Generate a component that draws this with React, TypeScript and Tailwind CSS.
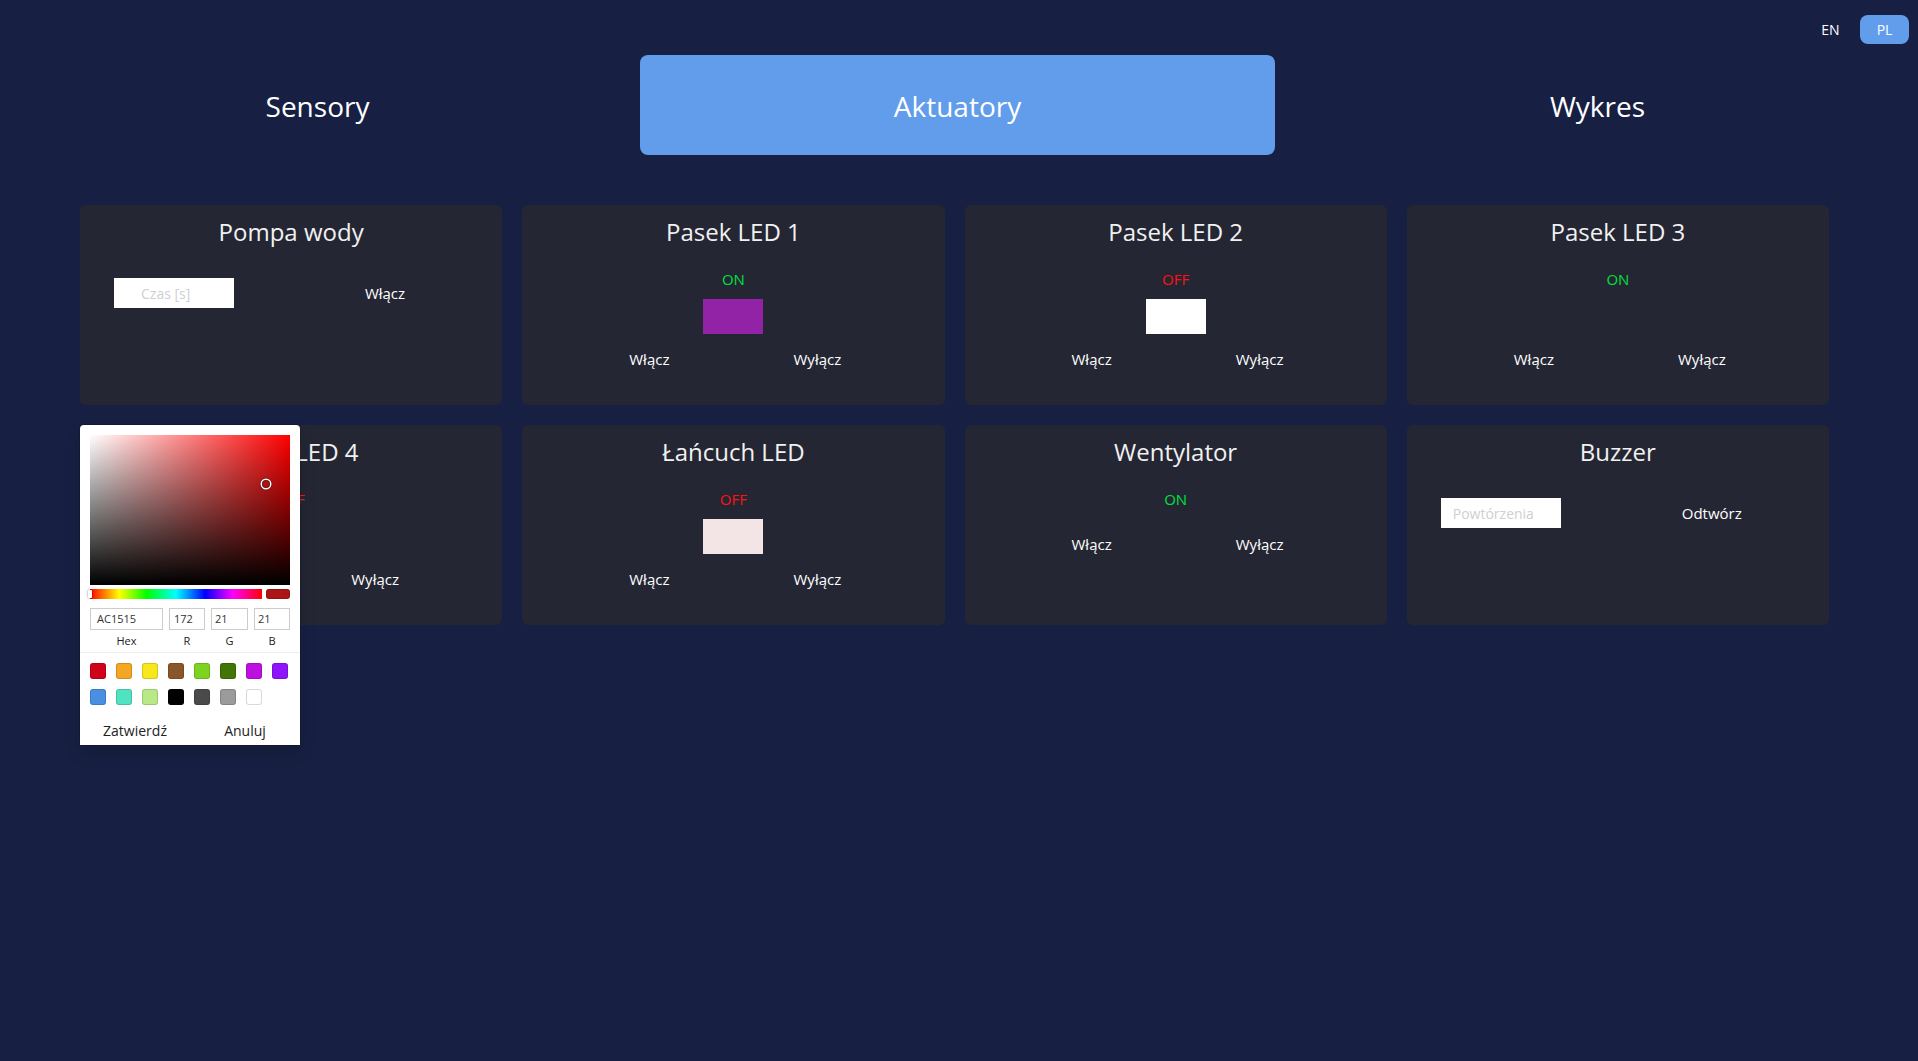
import { useState } from "react";

type Actuator = {
  name: string;
  kind: "led" | "switch" | "input";
  on?: boolean;
  color?: string | null;
  placeholder?: string;
  placeholderPad?: string;
  action?: string;
  picker?: boolean;
};

const actuators: Actuator[] = [
  { name: "Pompa wody", kind: "input", placeholder: "Czas [s]", placeholderPad: "pl-[27px]", action: "Włącz" },
  { name: "Pasek LED 1", kind: "led", on: true, color: "#9323a6" },
  { name: "Pasek LED 2", kind: "led", on: false, color: "#ffffff" },
  { name: "Pasek LED 3", kind: "led", on: true, color: null },
  { name: "Pasek LED 4", kind: "led", on: false, color: null, picker: true },
  { name: "Łańcuch LED", kind: "led", on: false, color: "#f3e5e5" },
  { name: "Wentylator", kind: "switch", on: true },
  { name: "Buzzer", kind: "input", placeholder: "Powtórzenia", placeholderPad: "pl-[12px]", action: "Odtwórz" },
];

// react-color sketch presets
const presets = [
  "#d0021b", "#f5a623", "#f8e71c", "#8b572a", "#7ed321", "#417505", "#bd10e0", "#9013fe",
  "#4a90e2", "#50e3c2", "#b8e986", "#000000", "#4a4a4a", "#9b9b9b", "#ffffff",
];

function ColorPicker() {
  return (
    <div className="absolute left-0 top-0 z-10 w-[220px] bg-white shadow-[0_0_0_1px_rgba(0,0,0,0.15),0_8px_16px_rgba(0,0,0,0.15)] rounded-t-[4px]">
      <div className="px-[10px] pt-[10px]">
        {/* saturation */}
        <div className="relative h-[150px] w-[200px] bg-[#ff0000]">
          <div className="absolute inset-0 bg-[linear-gradient(to_right,#fff,rgba(255,255,255,0))]" />
          <div className="absolute inset-0 bg-[linear-gradient(to_top,#000,rgba(0,0,0,0))]" />
          <div className="absolute left-[87.8%] top-[32.5%] -ml-[4px] -mt-[4px] h-[8px] w-[8px] rounded-full shadow-[0_0_0_1.5px_#fff,inset_0_0_1px_1px_rgba(0,0,0,0.3),0_0_1px_2px_rgba(0,0,0,0.4)]" />
        </div>
        {/* hue + swatch */}
        <div className="mt-[4px] flex gap-[4px]">
          <div className="relative h-[10px] flex-1 bg-[linear-gradient(to_right,#f00_0%,#ff0_17%,#0f0_33%,#0ff_50%,#00f_67%,#f0f_83%,#f00_100%)]">
            <div className="absolute left-[-2px] top-[1px] h-[8px] w-[4px] rounded-[1px] bg-white shadow-[0_0_2px_rgba(0,0,0,0.6)]" />
          </div>
          <div className="h-[10px] w-[24px] rounded-[3px] bg-[#ac1515] shadow-[inset_0_0_0_1px_rgba(0,0,0,0.15)]" />
        </div>
        {/* inputs */}
        <div className="mt-[9px] flex text-[11px] text-[#333]">
          {[
            { v: "AC1515", l: "Hex", w: "w-[73px]", pad: "pl-[7px]" },
            { v: "172", l: "R", w: "w-[36px] ml-[6px]", pad: "pl-[5px]" },
            { v: "21", l: "G", w: "w-[37px] ml-[6px]", pad: "pl-[4px]" },
            { v: "21", l: "B", w: "w-[36px] ml-[6px]", pad: "pl-[4px]" },
          ].map((f) => (
            <div key={f.l} className={f.w}>
              <div className={`flex h-[22px] items-center shadow-[inset_0_0_0_1px_#ccc] ${f.pad}`}>{f.v}</div>
              <div className="mt-[4px] text-center leading-[14px] text-[#222]">{f.l}</div>
            </div>
          ))}
        </div>
      </div>
      {/* preset swatches */}
      <div className="mt-[4px] flex flex-wrap border-t border-[#eeeeee] pl-[10px] pt-[10px]">
        {presets.map((c) => (
          <div
            key={c}
            className="mb-[10px] mr-[10px] h-[16px] w-[16px] rounded-[3px] shadow-[inset_0_0_0_1px_rgba(0,0,0,0.15)]"
            style={{ backgroundColor: c }}
          />
        ))}
      </div>
      <div className="flex h-[30px] items-center text-[14px] text-[#222]">
        <button className="flex-1 text-center">Zatwierdź</button>
        <button className="flex-1 text-center">Anuluj</button>
      </div>
    </div>
  );
}

function Status({ on }: { on?: boolean }) {
  return (
    <div className={`mt-[21px] h-[20px] text-[15px] leading-[20px] ${on ? "text-[#00e03c]" : "text-[#ff1212]"}`}>
      {on ? "ON" : "OFF"}
    </div>
  );
}

function OnOffButtons({ top }: { top: string }) {
  return (
    <div className={`flex justify-center gap-[84px] ${top}`}>
      <button className="h-[20px] w-[84px] text-[15px] leading-[20px] text-white">Włącz</button>
      <button className="h-[20px] w-[84px] text-[15px] leading-[20px] text-white">Wyłącz</button>
    </div>
  );
}

function ActuatorCard({ a }: { a: Actuator }) {
  return (
    <div className="relative flex h-[200px] flex-col items-center rounded-[6px] bg-[#242633] pt-[11px]">
      <h3 className="text-[24px] leading-[32px] text-[#f1f1f1]">{a.name}</h3>

      {a.kind === "input" && (
        <div className="mt-[30px] flex w-full items-center">
          <input
            placeholder={a.placeholder}
            className={`ml-[34px] h-[30px] w-[120px] bg-white text-[14px] outline-none placeholder:text-[#cfcfcf] ${a.placeholderPad}`}
          />
          <button className="ml-[101px] w-[100px] text-center text-[15px] text-white">{a.action}</button>
        </div>
      )}

      {a.kind === "led" && (
        <>
          <Status on={a.on} />
          <div
            className="mt-[10px] h-[35px] w-[60px]"
            style={{ backgroundColor: a.color ?? "transparent" }}
          />
          <OnOffButtons top="mt-[15px]" />
        </>
      )}

      {a.kind === "switch" && (
        <>
          <Status on={a.on} />
          <OnOffButtons top="mt-[25px]" />
        </>
      )}

      {a.picker && <ColorPicker />}
    </div>
  );
}

export default function App() {
  const [tab, setTab] = useState("Aktuatory");
  const [lang, setLang] = useState("PL");

  return (
    <div className="min-h-screen bg-[#172043] font-['Open_Sans',sans-serif]">
      {/* language switch */}
      <div className="flex justify-end gap-[5px] pr-[9px] pt-[15px]">
        {["EN", "PL"].map((l) => (
          <button
            key={l}
            onClick={() => setLang(l)}
            className={`h-[29px] w-[49px] rounded-[8px] text-[14px] text-white ${lang === l ? "bg-[#619dea]" : ""}`}
          >
            {l}
          </button>
        ))}
      </div>

      {/* tabs */}
      <div className="mt-[11px] grid w-[1915px] grid-cols-3 gap-[5px]">
        {["Sensory", "Aktuatory", "Wykres"].map((t) => (
          <button
            key={t}
            onClick={() => setTab(t)}
            className={`h-[100px] rounded-[8px] pt-[2px] text-[28px] text-white ${tab === t ? "bg-[#619dea]" : ""}`}
          >
            {t}
          </button>
        ))}
      </div>

      {/* actuators grid */}
      <div className="mt-[50px] pl-[80px]">
        <div className="grid w-[1749px] grid-cols-4 gap-[20px]">
          {actuators.map((a) => (
            <ActuatorCard key={a.name} a={a} />
          ))}
        </div>
      </div>
    </div>
  );
}
